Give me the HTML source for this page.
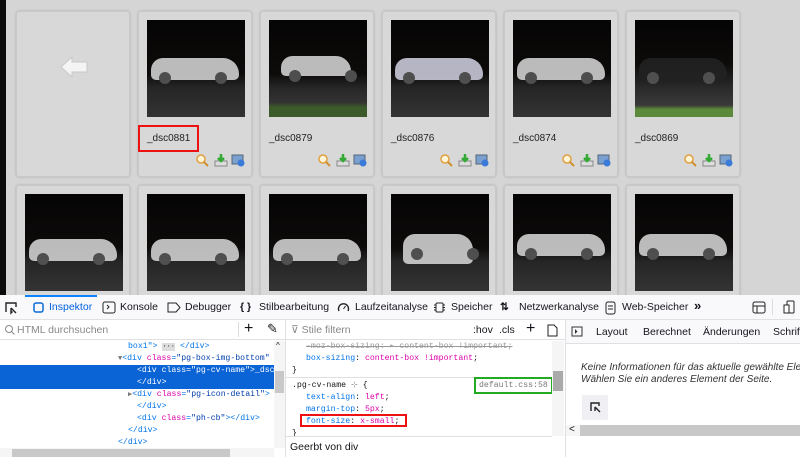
<!DOCTYPE html><html><head><style>
*{box-sizing:border-box;margin:0;padding:0}
body{width:800px;height:457px;overflow:hidden;background:#fff;font-family:"Liberation Sans",sans-serif;position:relative}
.top{position:absolute;left:0;top:0;width:800px;height:295px;background:#d5d5d5}
.blk{position:absolute;left:0;top:0;width:6px;height:295px;background:#0b0b0b}
.card{position:absolute;width:114px;height:166px;background:#d8d8d8;border-radius:3px;box-shadow:0 0 2px #aaa;border:1px solid #c9c9c9}
.ph{position:absolute;left:8px;top:8px;width:98px;height:97px;background:linear-gradient(#050404 0%,#0d0b0a 55%,#262626 70%,#333 100%);overflow:hidden}
.car{position:absolute;left:4px;top:38px;width:88px;height:22px;background:#cfcfcf;border-radius:12px 16px 5px 5px;opacity:.9}
.car:after{content:"";position:absolute;left:8px;top:14px;width:12px;height:12px;border-radius:50%;background:#555;box-shadow:56px 0 0 #555}
.nm{position:absolute;left:8px;top:121px;font-size:10px;color:#222}
.ic{position:absolute;top:141px;width:14px;height:14px}
.dt{position:absolute;top:295px;left:0;width:800px;height:162px;font-size:10.5px;color:#15141a;background:#fff;z-index:5;overflow:hidden}
.tb{position:absolute;top:0;left:0;width:800px;height:25px;background:#f9f9fb;border-bottom:1px solid #e0e0e2}
.tb span{position:absolute;top:6px;font-size:10.5px;white-space:nowrap}
.mono{font-family:"Liberation Mono",monospace;font-size:8.2px;white-space:nowrap;overflow:hidden}
.tag{color:#0074e8}.at{color:#dd00a9}.val{color:#003eaa}.pr{color:#0074e8}.pv{color:#dd00a9}
</style></head><body>
<div class="top"></div><div class="blk"></div>
<div class="card" style="left:16px;top:11px"><div style="position:absolute;left:42px;top:42px;width:28px;height:24px;"><svg width="30" height="26"><path d="M2 13 L13 3 L13 8 L28 8 L28 18 L13 18 L13 23 Z" fill="#f4f4f4" stroke="#c8c8c8"/></svg></div></div>
<div class="card" style="left:138px;top:11px"><div class="ph"><div class="car"></div></div><div class="nm">_dsc0881</div><div style="position:absolute;left:-1px;top:113px;width:61px;height:27px;border:2px solid #e11"></div><svg class="ic" style="left:56px" viewBox="0 0 14 14"><circle cx="6" cy="6" r="4" fill="#fff6d8" stroke="#e0a040" stroke-width="1.5"/><path d="M9 9l4 4" stroke="#d09030" stroke-width="2"/></svg><svg class="ic" style="left:75px" viewBox="0 0 14 14"><rect x="1" y="8" width="12" height="5" fill="#ddd" stroke="#888"/><path d="M7 1v7M4 5l3 3 3-3" stroke="#3a3" stroke-width="2.5" fill="none"/></svg><svg class="ic" style="left:92px" viewBox="0 0 14 14"><rect x="1" y="2" width="11" height="9" fill="#7aa0d0" stroke="#567"/><circle cx="10" cy="10" r="3.5" fill="#3a7ad8"/></svg></div>
<div class="card" style="left:260px;top:11px"><div class="ph" style="background:linear-gradient(#050404 0%,#0d0b0a 55%,#262626 70%,#333 85%,#3d5a2a 90%)"><div class="car" style="left:12px;top:36px;width:70px;height:20px"></div></div><div class="nm">_dsc0879</div><svg class="ic" style="left:56px" viewBox="0 0 14 14"><circle cx="6" cy="6" r="4" fill="#fff6d8" stroke="#e0a040" stroke-width="1.5"/><path d="M9 9l4 4" stroke="#d09030" stroke-width="2"/></svg><svg class="ic" style="left:75px" viewBox="0 0 14 14"><rect x="1" y="8" width="12" height="5" fill="#ddd" stroke="#888"/><path d="M7 1v7M4 5l3 3 3-3" stroke="#3a3" stroke-width="2.5" fill="none"/></svg><svg class="ic" style="left:92px" viewBox="0 0 14 14"><rect x="1" y="2" width="11" height="9" fill="#7aa0d0" stroke="#567"/><circle cx="10" cy="10" r="3.5" fill="#3a7ad8"/></svg></div>
<div class="card" style="left:382px;top:11px"><div class="ph"><div class="car" style="background:#c8c8d8"></div></div><div class="nm">_dsc0876</div><svg class="ic" style="left:56px" viewBox="0 0 14 14"><circle cx="6" cy="6" r="4" fill="#fff6d8" stroke="#e0a040" stroke-width="1.5"/><path d="M9 9l4 4" stroke="#d09030" stroke-width="2"/></svg><svg class="ic" style="left:75px" viewBox="0 0 14 14"><rect x="1" y="8" width="12" height="5" fill="#ddd" stroke="#888"/><path d="M7 1v7M4 5l3 3 3-3" stroke="#3a3" stroke-width="2.5" fill="none"/></svg><svg class="ic" style="left:92px" viewBox="0 0 14 14"><rect x="1" y="2" width="11" height="9" fill="#7aa0d0" stroke="#567"/><circle cx="10" cy="10" r="3.5" fill="#3a7ad8"/></svg></div>
<div class="card" style="left:504px;top:11px"><div class="ph"><div class="car"></div></div><div class="nm">_dsc0874</div><svg class="ic" style="left:56px" viewBox="0 0 14 14"><circle cx="6" cy="6" r="4" fill="#fff6d8" stroke="#e0a040" stroke-width="1.5"/><path d="M9 9l4 4" stroke="#d09030" stroke-width="2"/></svg><svg class="ic" style="left:75px" viewBox="0 0 14 14"><rect x="1" y="8" width="12" height="5" fill="#ddd" stroke="#888"/><path d="M7 1v7M4 5l3 3 3-3" stroke="#3a3" stroke-width="2.5" fill="none"/></svg><svg class="ic" style="left:92px" viewBox="0 0 14 14"><rect x="1" y="2" width="11" height="9" fill="#7aa0d0" stroke="#567"/><circle cx="10" cy="10" r="3.5" fill="#3a7ad8"/></svg></div>
<div class="card" style="left:626px;top:11px"><div class="ph" style="background:linear-gradient(#050404 0%,#0d0b0a 45%,#2a2a2a 70%,#3a3a3a 88%,#5a8a3a 92%)"><div class="car" style="background:#222"></div></div><div class="nm">_dsc0869</div><svg class="ic" style="left:56px" viewBox="0 0 14 14"><circle cx="6" cy="6" r="4" fill="#fff6d8" stroke="#e0a040" stroke-width="1.5"/><path d="M9 9l4 4" stroke="#d09030" stroke-width="2"/></svg><svg class="ic" style="left:75px" viewBox="0 0 14 14"><rect x="1" y="8" width="12" height="5" fill="#ddd" stroke="#888"/><path d="M7 1v7M4 5l3 3 3-3" stroke="#3a3" stroke-width="2.5" fill="none"/></svg><svg class="ic" style="left:92px" viewBox="0 0 14 14"><rect x="1" y="2" width="11" height="9" fill="#7aa0d0" stroke="#567"/><circle cx="10" cy="10" r="3.5" fill="#3a7ad8"/></svg></div>
<div class="card" style="left:16px;top:185px"><div class="ph"><div class="car" style="top:45px"></div></div></div>
<div class="card" style="left:138px;top:185px"><div class="ph"><div class="car" style="top:45px"></div></div></div>
<div class="card" style="left:260px;top:185px"><div class="ph"><div class="car" style="top:45px"></div></div></div>
<div class="card" style="left:382px;top:185px"><div class="ph"><div class="car" style="top:40px;left:12px;width:70px;height:30px"></div></div></div>
<div class="card" style="left:504px;top:185px"><div class="ph"><div class="car" style="top:40px"></div></div></div>
<div class="card" style="left:626px;top:185px"><div class="ph"><div class="car" style="top:40px"></div></div></div>

<div class="dt">
<div class="tb">
<div style="position:absolute;left:25px;top:0;width:72px;height:2px;background:#0a84ff"></div>
<svg style="position:absolute;left:4px;top:6px" width="14" height="14"><path d="M2 11V2h10v4M7 7l5 5M7 7v5l1.5-1.5" stroke="#222" fill="none" stroke-width="1.4"/></svg>
<svg style="position:absolute;left:32px;top:6px" width="13" height="13"><rect x="2" y="2" width="9" height="9" rx="2" stroke="#0a6cd8" fill="none" stroke-width="1.5"/></svg>
<span style="left:49px;color:#0060df">Inspektor</span>
<svg style="position:absolute;left:102px;top:6px" width="14" height="13"><rect x="1" y="1" width="12" height="11" rx="2" stroke="#222" fill="none"/><path d="M5 4l2 2-2 2" stroke="#222" fill="none"/></svg>
<span style="left:120px">Konsole</span>
<svg style="position:absolute;left:167px;top:7px" width="14" height="11"><path d="M1 1h8l4 4.5-4 4.5H1z" stroke="#222" fill="none"/></svg>
<span style="left:185px">Debugger</span>
<span style="left:240px;font-weight:bold">{ }</span>
<span style="left:259px">Stilbearbeitung</span>
<svg style="position:absolute;left:337px;top:6px" width="13" height="13"><path d="M2 10a5 5 0 1 1 9 0" stroke="#222" fill="none" stroke-width="1.4"/><path d="M6.5 8l2-3" stroke="#222"/></svg>
<span style="left:355px">Laufzeitanalyse</span>
<svg style="position:absolute;left:433px;top:6px" width="13" height="13"><rect x="3" y="2" width="7" height="9" rx="1" stroke="#222" fill="none"/><path d="M1 4h2M1 6.5h2M1 9h2M10 4h2M10 6.5h2M10 9h2" stroke="#222"/></svg>
<span style="left:451px">Speicher</span>
<span style="left:500px;font-weight:bold">⇅</span>
<span style="left:519px">Netzwerkanalyse</span>
<svg style="position:absolute;left:605px;top:6px" width="11" height="14"><rect x="1" y="1" width="9" height="12" rx="2" stroke="#222" fill="none"/><path d="M3 5h5M3 8h5" stroke="#222"/></svg>
<span style="left:622px">Web-Speicher</span>
<span style="left:694px;font-weight:bold;font-size:13px;top:3px">»</span>
<svg style="position:absolute;left:752px;top:6px" width="14" height="13"><rect x="1" y="1" width="12" height="11" rx="2" stroke="#222" fill="none"/><path d="M1 5h12M5 5v7" stroke="#222"/></svg>
<div style="position:absolute;left:772px;top:4px;width:1px;height:16px;background:#ddd"></div>
<svg style="position:absolute;left:783px;top:5px" width="12" height="15"><rect x="4" y="1" width="7" height="12" rx="1" stroke="#222" fill="none"/><rect x="1" y="5" width="5" height="8" stroke="#222" fill="#fff"/></svg>
</div>
<div style="position:absolute;left:0;top:25px;width:285px;height:20px;border-bottom:1px solid #e0e0e2;background:#fff">
<svg style="position:absolute;left:4px;top:4px" width="12" height="12"><circle cx="5" cy="5" r="3.5" stroke="#888" fill="none"/><path d="M7.5 7.5l3 3" stroke="#888"/></svg>
<span style="position:absolute;left:17px;top:4px;color:#888">HTML durchsuchen</span>
<div style="position:absolute;left:238px;top:2px;width:1px;height:15px;background:#ddd"></div>
<span style="position:absolute;left:244px;top:0;font-size:16px">+</span>
<span style="position:absolute;left:267px;top:1px;font-size:13px">✎</span>
</div>
<div style="position:absolute;left:285px;top:25px;width:1px;height:137px;background:#e0e0e2"></div>
<div class="mono" style="position:absolute;left:0;top:46px;width:274px;line-height:12px">
<div style="padding-left:128px;height:12px"><span class="tag">box1"&gt;</span> <span style="background:#ddd;font-size:7px">···</span> <span class="tag">&lt;/div&gt;</span></div>
<div style="padding-left:118px;height:12px"><span style="color:#777;font-size:7px">▼</span><span class="tag">&lt;div </span><span class="at">class</span><span class="tag">=</span><span class="val">"pg-box-img-bottom"</span></div>
<div style="padding-left:137px;height:24px;background:#0a64d6;color:#fff;width:274px">&lt;div class="pg-cv-name"&gt;_dsc0881<br>&lt;/div&gt;</div>
<div style="padding-left:128px;height:12px"><span style="color:#777;font-size:7px">▶</span><span class="tag">&lt;div </span><span class="at">class</span><span class="tag">=</span><span class="val">"pg-icon-detail"</span><span class="tag">&gt;</span></div>
<div style="padding-left:137px;height:12px" class="tag">&lt;/div&gt;</div>
<div style="padding-left:137px;height:12px"><span class="tag">&lt;div </span><span class="at">class</span><span class="tag">=</span><span class="val">"ph-cb"</span><span class="tag">&gt;&lt;/div&gt;</span></div>
<div style="padding-left:128px;height:12px" class="tag">&lt;/div&gt;</div>
<div style="padding-left:118px;height:12px" class="tag">&lt;/div&gt;</div>
</div>
<div style="position:absolute;left:274px;top:46px;width:11px;height:107px;background:#f5f5f5"><div style="position:absolute;left:1px;top:30px;width:9px;height:22px;background:#c8c8c8"></div><span style="position:absolute;left:2px;top:0;font-size:8px">^</span></div>
<div style="position:absolute;left:0;top:153px;width:274px;height:9px;background:#f5f5f5"><div style="position:absolute;left:12px;top:1px;width:218px;height:8px;background:#c8c8c8"></div></div>
<div style="position:absolute;left:286px;top:25px;width:279px;height:20px;border-bottom:1px solid #e0e0e2">
<span style="position:absolute;left:5px;top:4px;color:#888">⊽ Stile filtern</span>
<span style="position:absolute;left:187px;top:4px">:hov</span><span style="position:absolute;left:213px;top:4px">.cls</span>
<span style="position:absolute;left:240px;top:0;font-size:16px">+</span>
<svg style="position:absolute;left:261px;top:4px" width="11" height="13"><path d="M1 1h6l3 3v8H1z" stroke="#222" fill="none"/></svg>
</div>
<div class="mono" style="position:absolute;left:292px;top:46px;line-height:12px;width:260px">
<div style="padding-left:14px;color:#999;text-decoration:line-through;height:12px">-moz-box-sizing: ▸ content-box !important;</div>
<div style="padding-left:14px;height:12px"><span class="pr">box-sizing</span>: <span class="pv">content-box !important</span>;</div>
<div style="height:13px">}</div>
</div>
<div style="position:absolute;left:286px;top:82px;width:266px;height:1px;background:#e0e0e2"></div>
<div class="mono" style="position:absolute;left:292px;top:85px;line-height:12px">
<div>.pg-cv-name <span style="color:#888">⊹</span> {</div>
<div style="padding-left:14px"><span class="pr">text-align</span>: <span class="pv">left</span>;</div>
<div style="padding-left:14px"><span class="pr">margin-top</span>: <span class="pv">5px</span>;</div>
<div style="padding-left:14px"><span class="pr">font-size</span>: <span class="pv">x-small</span>;</div>
<div>}</div>
</div>
<div style="position:absolute;left:300px;top:119px;width:107px;height:13px;border:2px solid #e11"></div>
<div class="mono" style="position:absolute;left:474px;top:82px;width:79px;height:17px;border:2px solid #2a2;color:#777;padding:2px 0 0 3px">default.css:58</div>
<div style="position:absolute;left:286px;top:141px;width:266px;height:1px;background:#e0e0e2"></div>
<span style="position:absolute;left:290px;top:146px">Geerbt von div</span>
<div style="position:absolute;left:552px;top:46px;width:12px;height:95px;background:#f5f5f5"><div style="position:absolute;left:1px;top:30px;width:10px;height:20px;background:#aaa"></div></div>
<div style="position:absolute;left:565px;top:25px;width:1px;height:137px;background:#e0e0e2"></div>
<div style="position:absolute;left:566px;top:25px;width:234px;height:24px;border-bottom:1px solid #e0e0e2;background:#f9f9fb;white-space:nowrap">
<svg style="position:absolute;left:5px;top:6px" width="12" height="11"><rect x="1" y="1" width="10" height="9" stroke="#333" fill="none"/><path d="M4 3l2.5 2.5L4 8" fill="#333"/></svg>
<span style="position:absolute;left:30px;top:6px">Layout</span><span style="position:absolute;left:77px;top:6px">Berechnet</span><span style="position:absolute;left:137px;top:6px">Änderungen</span><span style="position:absolute;left:207px;top:6px">Schrift</span>
</div>
<div style="position:absolute;left:581px;top:67px;font-style:italic;font-size:10px;line-height:12px;color:#333;white-space:nowrap">Keine Informationen für das aktuelle gewählte Element<br>Wählen Sie ein anderes Element der Seite.</div>
<div style="position:absolute;left:582px;top:100px;width:26px;height:25px;background:#f0f0f4"><svg style="position:absolute;left:7px;top:6px" width="13" height="13"><path d="M2 10V2h8v3M6 6l5 5M6 6v4" stroke="#222" fill="none" stroke-width="1.4"/></svg></div>
<div style="position:absolute;left:566px;top:130px;width:234px;height:11px;background:#f5f5f5"><div style="position:absolute;left:14px;top:0;width:220px;height:11px;background:#c8c8c8"></div><span style="position:absolute;left:3px;top:-1px;font-size:10px">&lt;</span></div>
</div>
</body></html>
